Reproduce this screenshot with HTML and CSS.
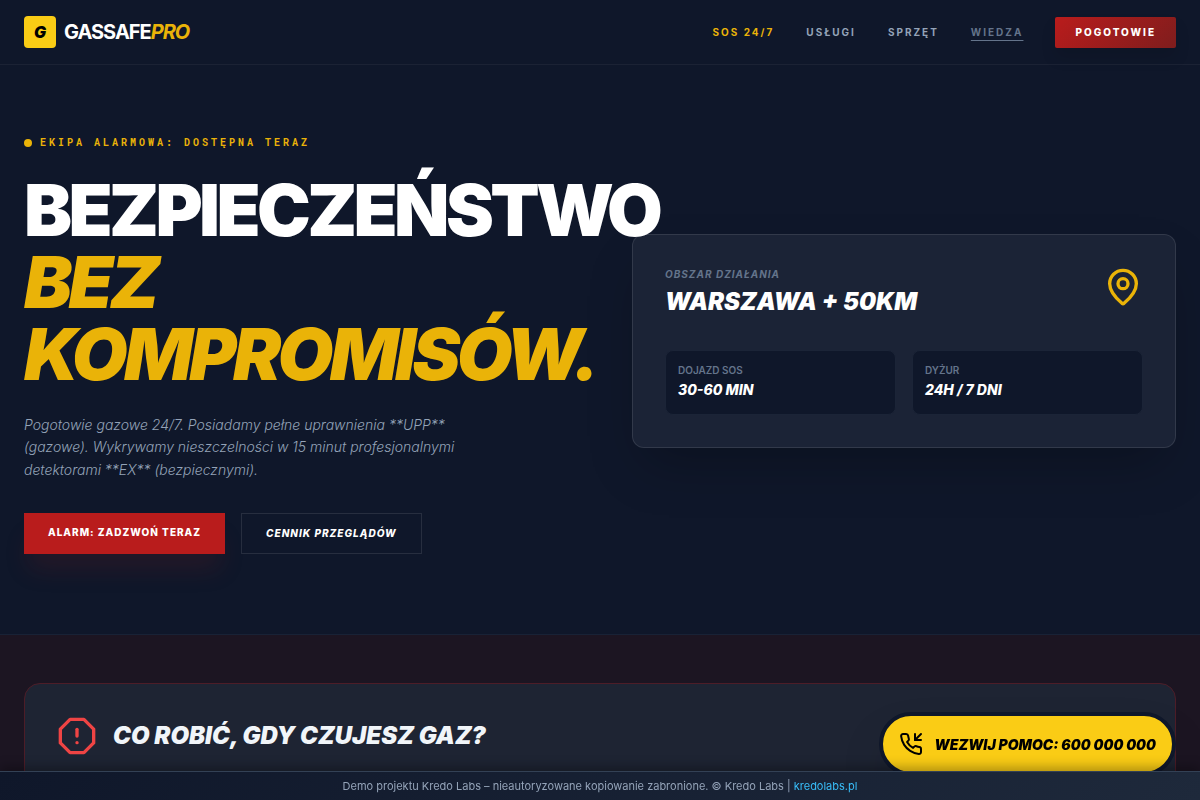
FILE: index.html
```html
<!DOCTYPE html>
<html lang="pl">
<head>
    <meta charset="UTF-8">
    <meta name="viewport" content="width=device-width, initial-scale=1.0">
    <title>GasSafe Pro - Pogotowie gazowe 24/7</title>
    <link rel="stylesheet" href="styles.css">
</head>
<body>

<header class="navbar">
    <a href="#" class="logo">
        <span class="logo-mark">G</span>
        <span class="logo-text">GASSAFE<em>PRO</em></span>
    </a>
    <nav class="nav-links">
        <a href="#sos" class="sos">SOS 24/7</a>
        <a href="#uslugi">USŁUGI</a>
        <a href="#sprzet">SPRZĘT</a>
        <a href="#wiedza" class="current">WIEDZA</a>
        <button type="button" class="nav-button">POGOTOWIE</button>
    </nav>
</header>

<main>
    <section class="hero">
        <div class="hero-content">
            <div class="status"><span class="dot"></span>EKIPA ALARMOWA: DOSTĘPNA TERAZ</div>
            <h1>BEZPIECZEŃSTWO <em>BEZ KOMPROMISÓW.</em></h1>
            <p class="lead">Pogotowie gazowe 24/7. Posiadamy pełne uprawnienia **UPP** (gazowe). Wykrywamy nieszczelności w 15 minut profesjonalnymi detektorami **EX** (bezpiecznymi).</p>
            <div class="actions">
                <a href="tel:600000000" class="btn btn-alarm">ALARM: ZADZWOŃ TERAZ</a>
                <a href="#cennik" class="btn btn-outline">CENNIK PRZEGLĄDÓW</a>
            </div>
        </div>

        <div class="area-card">
            <div class="area-header">
                <div>
                    <p class="area-label">OBSZAR DZIAŁANIA</p>
                    <h2>WARSZAWA + 50KM</h2>
                </div>
                <svg class="icon-pin" viewBox="0 0 24 24" aria-hidden="true">
                    <path d="M20 10c0 4.993-5.539 10.193-7.399 11.799a1 1 0 0 1-1.202 0C9.539 20.193 4 14.993 4 10a8 8 0 0 1 16 0"/>
                    <circle cx="12" cy="10" r="3"/>
                </svg>
            </div>
            <div class="area-stats">
                <div class="stat">
                    <p class="stat-label">DOJAZD SOS</p>
                    <p class="stat-value">30-60 MIN</p>
                </div>
                <div class="stat">
                    <p class="stat-label">DYŻUR</p>
                    <p class="stat-value">24H / 7 DNI</p>
                </div>
            </div>
        </div>
    </section>

    <section class="warning" id="sos">
        <div class="warning-card">
            <div class="warning-title">
                <svg class="icon-alert" viewBox="0 0 24 24" aria-hidden="true">
                    <polygon points="7.86 2 16.14 2 22 7.86 22 16.14 16.14 22 7.86 22 2 16.14 2 7.86 7.86 2"/>
                    <line x1="12" y1="8" x2="12" y2="12"/>
                    <line x1="12" y1="16" x2="12.01" y2="16"/>
                </svg>
                <h2>CO ROBIĆ, GDY CZUJESZ GAZ?</h2>
            </div>
        </div>
    </section>
</main>

<a href="tel:600000000" class="call-button">
    <svg class="icon-phone" viewBox="0 0 24 24" aria-hidden="true">
        <polyline points="16 2 16 8 22 8"/>
        <line x1="22" y1="2" x2="16" y2="8"/>
        <path d="M22 16.92v3a2 2 0 0 1-2.18 2 19.79 19.79 0 0 1-8.63-3.07 19.5 19.5 0 0 1-6-6 19.79 19.79 0 0 1-3.07-8.67A2 2 0 0 1 4.11 2h3a2 2 0 0 1 2 1.72 12.84 12.84 0 0 0 .7 2.81 2 2 0 0 1-.45 2.11L8.09 9.91a16 16 0 0 0 6 6l1.27-1.27a2 2 0 0 1 2.11-.45 12.84 12.84 0 0 0 2.81.7A2 2 0 0 1 22 16.92z"/>
    </svg>
    WEZWIJ POMOC: 600 000 000
</a>

<footer class="demo-bar">
    Demo projektu Kredo Labs – nieautoryzowane kopiowanie zabronione. © Kredo Labs | <a href="#kredolabs">kredolabs.pl</a>
</footer>

</body>
</html>
```
FILE: styles.css
```css
* {
    box-sizing: border-box;
    margin: 0;
    padding: 0;
}
body {
    font-family: Inter, "Liberation Sans", sans-serif;
    font-size: 16px;
    line-height: 1.5;
    background: #0f172a;
    color: #f1f5f9;
    overflow-x: hidden;
}
a {
    color: inherit;
    text-decoration: none;
}
svg {
    display: block;
    flex-shrink: 0;
    fill: none;
    stroke: currentColor;
    stroke-width: 2;
    stroke-linecap: round;
    stroke-linejoin: round;
}

/* Navigation */
.navbar {
    position: fixed;
    top: 0;
    left: 0;
    right: 0;
    z-index: 50;
    display: flex;
    align-items: center;
    justify-content: space-between;
    height: 65px;
    padding: 0 24px;
    background: #0f172a;
    border-bottom: 1px solid rgba(255,255,255,0.05);
}
.logo {
    display: flex;
    align-items: center;
    gap: 8px;
}
.logo-mark {
    display: flex;
    align-items: center;
    justify-content: center;
    width: 32px;
    height: 32px;
    border-radius: 4px;
    background: #facc15;
    color: #000;
    font-weight: 900;
    font-style: italic;
}
.logo-text {
    color: #fff;
    font-size: 20px;
    font-weight: 700;
    letter-spacing: -1px;
}
.logo-text em {
    color: #eab308;
}
.nav-links {
    display: flex;
    align-items: center;
    gap: 32px;
    font-size: 10px;
    line-height: 15px;
    font-weight: 700;
    letter-spacing: 2px;
    color: #94a3b8;
}
.nav-links .sos {
    color: #eab308;
}
.nav-links .current {
    color: #64748b;
    text-decoration: underline;
    text-decoration-thickness: 1px;
    text-underline-offset: 4px;
}
.nav-button {
    padding: 8px 20px;
    border: none;
    border-radius: 2px;
    background: linear-gradient(135deg, #b91c1c, #7f1d1d);
    box-shadow: 0 10px 15px rgba(0,0,0,0.1);
    color: #fff;
    font: inherit;
    font-weight: 800;
    letter-spacing: inherit;
    cursor: pointer;
}

/* Hero */
.hero {
    display: grid;
    grid-template-columns: repeat(2, minmax(0, 1fr));
    gap: 64px;
    align-items: center;
    padding: 128px 24px 80px;
}
.hero-content {
    position: relative;
    z-index: 1;
}
.status {
    display: flex;
    align-items: center;
    gap: 8px;
    margin-bottom: 17px;
    color: #eab308;
    font-family: "Roboto Mono", "DejaVu Sans Mono", monospace;
    font-size: 10px;
    line-height: 29px;
    font-weight: 700;
    letter-spacing: 3px;
}
.dot {
    width: 8px;
    height: 8px;
    border-radius: 50%;
    background: #eab308;
}
h1 {
    margin-bottom: 24px;
    color: #fff;
    font-size: 72px;
    line-height: 1;
    font-weight: 900;
    letter-spacing: -0.05em;
}
h1 em {
    color: #eab308;
}
.lead {
    max-width: 448px;
    margin-bottom: 32px;
    color: #94a3b8;
    font-size: 14px;
    line-height: 1.6;
    font-weight: 300;
    font-style: italic;
}
.actions {
    display: flex;
    gap: 16px;
}
.btn {
    padding: 12px 24px;
    color: #fff;
    font-size: 10px;
    line-height: 15px;
    font-weight: 800;
    letter-spacing: 1px;
}
.btn-alarm {
    background: #b91c1c;
    box-shadow: 0 20px 25px -5px rgba(127,29,29,0.2);
}
.btn-outline {
    border: 1px solid rgba(255,255,255,0.1);
    font-style: italic;
}

/* Area card */
.area-card {
    padding: 32px;
    border: 1px solid rgba(255,255,255,0.1);
    border-radius: 12px;
    background: #1b2336;
    box-shadow: 0 25px 50px -12px rgba(0,0,0,0.25);
}
.area-header {
    display: flex;
    justify-content: space-between;
    margin-bottom: 32px;
}
.area-label {
    margin-bottom: 4px;
    color: #64748b;
    font-size: 10px;
    line-height: 15px;
    font-weight: 700;
    font-style: italic;
    letter-spacing: 1px;
}
.area-card h2, .warning h2 {
    font-size: 24px;
    line-height: 32px;
    font-weight: 900;
    font-style: italic;
}
.area-card h2 {
    color: #fff;
}
.icon-pin {
    width: 40px;
    height: 40px;
    color: #eab308;
}
.area-stats {
    display: grid;
    grid-template-columns: 1fr 1fr;
    gap: 16px;
}
.stat {
    padding: 12px;
    border: 1px solid #1b2437;
    border-radius: 8px;
    background: #0f172a;
}
.stat-label {
    color: #64748b;
    font-size: 10px;
    line-height: 15px;
    font-weight: 600;
}
.stat-value {
    color: #fff;
    font-size: 14px;
    line-height: 24px;
    font-weight: 800;
    font-style: italic;
}

/* Gas warning */
.warning {
    padding: 48px 24px;
    border-top: 1px solid #182236;
    background: #1c1522;
}
.warning-card {
    min-height: 320px;
    padding: 32px;
    border: 1px solid #4d1d28;
    border-radius: 16px;
    background: #1e2433;
}
.warning-title {
    display: flex;
    align-items: center;
    gap: 16px;
}
.icon-alert {
    width: 40px;
    height: 40px;
    color: #ef4444;
}

/* Floating call button */
.call-button {
    position: fixed;
    right: 24px;
    bottom: 24px;
    z-index: 60;
    display: flex;
    align-items: center;
    gap: 12px;
    padding: 16px;
    border: 4px solid #0f172a;
    border-radius: 32px;
    background: #facc15;
    box-shadow: 0 25px 50px -12px rgba(0,0,0,0.25);
    color: #000;
    font-size: 14px;
    font-weight: 900;
    font-style: italic;
}
.icon-phone {
    width: 24px;
    height: 24px;
}

/* Bottom bar */
.demo-bar {
    position: fixed;
    left: 0;
    right: 0;
    bottom: 0;
    z-index: 70;
    padding: 6px 16px;
    border-top: 1px solid #334155;
    background: linear-gradient(135deg, #0f172a, #1e293b);
    box-shadow: 0 -4px 12px rgba(0,0,0,0.3);
    color: #94a3b8;
    font-size: 11px;
    line-height: 16px;
    text-align: center;
}
.demo-bar a {
    color: #38bdf8;
}
```
